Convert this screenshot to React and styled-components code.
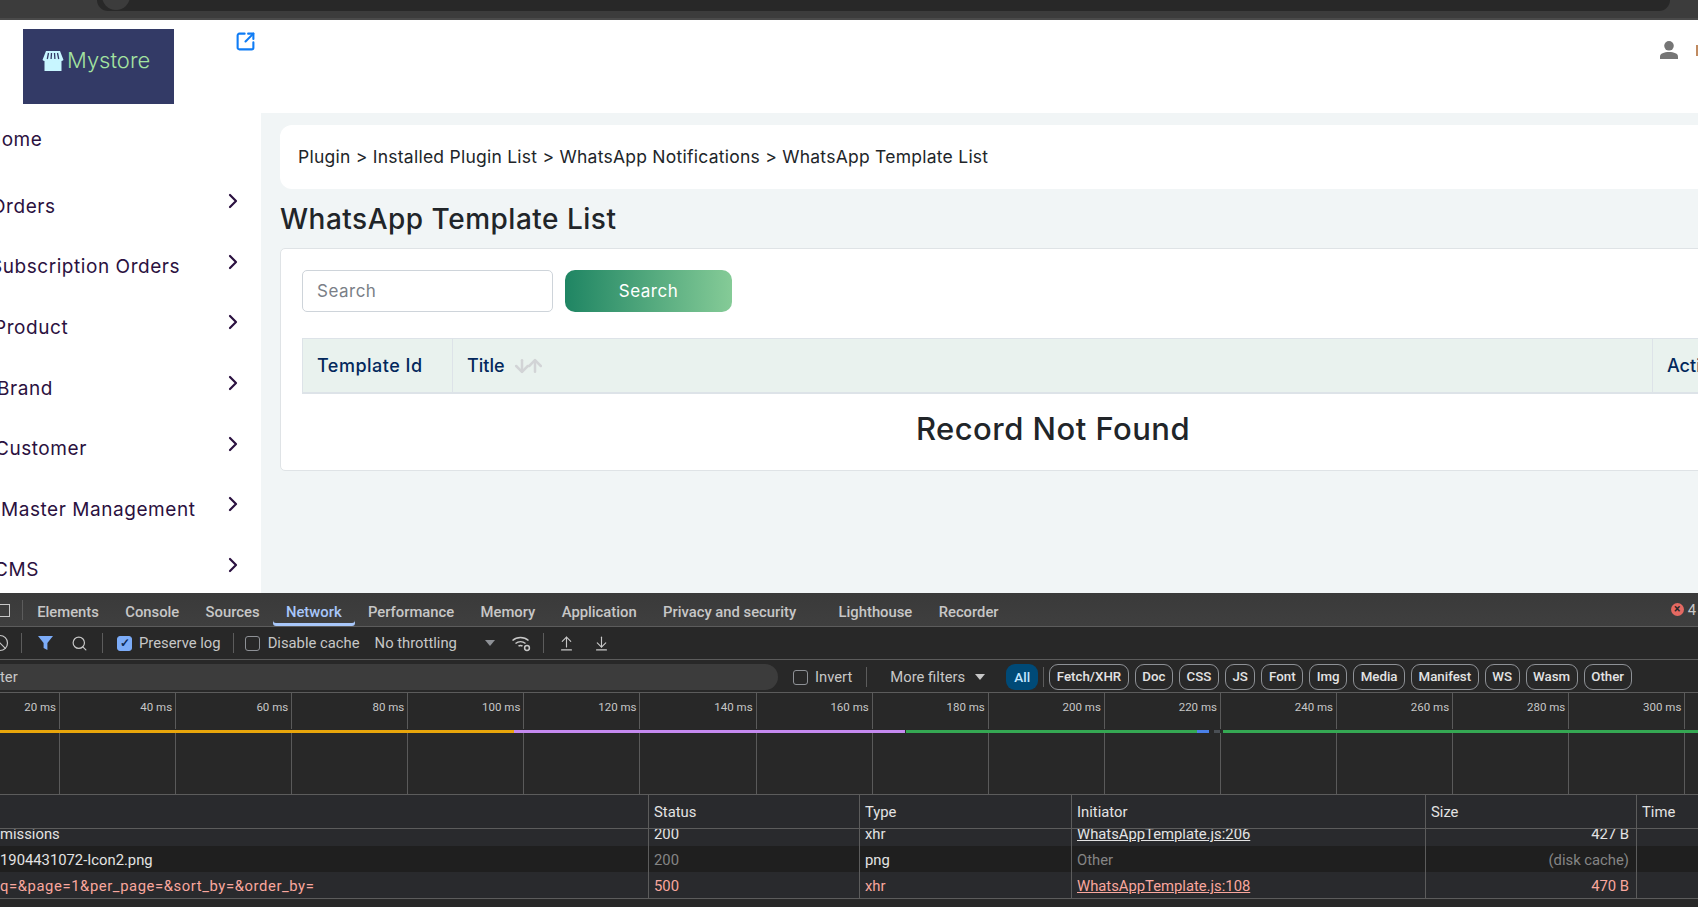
import React from "react";
import styled, { createGlobalStyle } from "styled-components";
import {
  ArrowDown,
  ArrowDownToLine,
  ArrowUp,
  ArrowUpFromLine,
  Ban,
  ChevronRight,
  Search as SearchIcon,
  SquareArrowOutUpRight,
} from "lucide-react";

const MENU = [
  { label: "Home", x: -13, shift: -6, height: 58, arrow: false },
  { label: "Orders", x: -9, height: 60.6, arrow: true },
  { label: "Subscription Orders", x: -10, height: 60.6, arrow: true },
  { label: "Product", x: -6, height: 60.6, arrow: true },
  { label: "Brand", x: -3, height: 60.6, arrow: true },
  { label: "Customer", x: -5, height: 60.6, arrow: true },
  { label: "Master Management", x: 1, height: 60.6, arrow: true },
  { label: "CMS", x: -6, height: 60.6, arrow: true },
];

const TABS = [
  "Elements",
  "Console",
  "Sources",
  "Network",
  "Performance",
  "Memory",
  "Application",
  "Privacy and security",
  "Lighthouse",
  "Recorder",
];

const CHIPS = [
  "Fetch/XHR",
  "Doc",
  "CSS",
  "JS",
  "Font",
  "Img",
  "Media",
  "Manifest",
  "WS",
  "Wasm",
  "Other",
];

const TICKS = [20, 40, 60, 80, 100, 120, 140, 160, 180, 200, 220, 240, 260, 280, 300, 320];

const REQUESTS = [
  { name: "missions", status: "200", type: "xhr", initiator: "WhatsAppTemplate.js:206", size: "427 B" },
  { name: "1904431072-Icon2.png", status: "200", type: "png", initiator: "Other", size: "(disk cache)", tone: "cached" },
  { name: "q=&page=1&per_page=&sort_by=&order_by=", status: "500", type: "xhr", initiator: "WhatsAppTemplate.js:108", size: "470 B", tone: "error" },
];

const GlobalStyle = createGlobalStyle`
  html, body {
    margin: 0;
    padding: 0;
    background: #fff;
    overflow: hidden;
  }
  * {
    box-sizing: border-box;
  }
`;

const App = () => {
  return (
    <Screen>
      <GlobalStyle />
      <BrowserBar>
        <AddressBar>
          <SiteBadge />
        </AddressBar>
      </BrowserBar>

      <Page>
        <Header>
          <Logo>
            <StoreMark />
            <LogoText>Mystore</LogoText>
          </Logo>
          <VisitLink>
            <SquareArrowOutUpRight size={21} strokeWidth={2.4} />
          </VisitLink>
          <HeaderRight>
            <UserMark />
            <LangSliver />
          </HeaderRight>
        </Header>
        <Body>
          <Sidebar>
            {MENU.map((item) => (
              <MenuItem key={item.label} $height={item.height}>
                <MenuLabel $x={item.x} $shift={item.shift}>
                  {item.label}
                </MenuLabel>
                {item.arrow && <ChevronRight size={24} strokeWidth={2.2} />}
              </MenuItem>
            ))}
          </Sidebar>
          <Main>
            <Breadcrumb>
              Plugin &gt; Installed Plugin List &gt; WhatsApp Notifications &gt; WhatsApp Template List
            </Breadcrumb>
            <PageTitle>WhatsApp Template List</PageTitle>
            <Card>
              <SearchRow>
                <SearchInput placeholder="Search" readOnly />
                <SearchButton>Search</SearchButton>
              </SearchRow>
              <TableHead>
                <HeadCell $width="150px" $spaced>Template Id</HeadCell>
                <HeadCell $grow>
                  Title
                  <SortArrows>
                    <ArrowDown size={20} strokeWidth={3} />
                    <ArrowUp size={20} strokeWidth={3} />
                  </SortArrows>
                </HeadCell>
                <HeadCell $width="150px">Action</HeadCell>
              </TableHead>
              <EmptyText>Record Not Found</EmptyText>
            </Card>
          </Main>
        </Body>
      </Page>

      <DevTools>
        <TabBar>
          <DockIcon />
          <TabDivider />
          {TABS.map((tab) => (
            <Tab key={tab} $active={tab === "Network"} $spaced={tab === "Lighthouse"}>
              {tab}
            </Tab>
          ))}
          <ErrorCount>
            <ErrorDot>×</ErrorDot>4
          </ErrorCount>
        </TabBar>

        <Toolbar>
          <ClearIcon>
            <Ban size={18} strokeWidth={1.6} />
          </ClearIcon>
          <ToolDivider $left={12} $right={15} />
          <svg width="17" height="16" viewBox="0 0 17 16">
            <path d="M1 1h15l-5.6 7v7l-3.8-2V8z" fill="#7cacf8" />
          </svg>
          <ToolIcon $left={17}>
            <SearchIcon size={17} strokeWidth={1.7} />
          </ToolIcon>
          <ToolDivider $left={14} $right={14} />
          <CheckBox $checked>✓</CheckBox>
          <ToolText $left={7}>Preserve log</ToolText>
          <ToolDivider $left={12} $right={11} />
          <CheckBox />
          <ToolText $left={8}>Disable cache</ToolText>
          <ToolText $left={15} $width="110px">No throttling</ToolText>
          <DropArrow />
          <NetworkConfig $left={16}>
            <svg width="21" height="20" viewBox="0 0 21 20" fill="none" stroke="#c7c7c7" strokeWidth="1.5">
              <path d="M1.5 7.5a12 12 0 0 1 16 0M4.5 10.5a8 8 0 0 1 10 0M7.5 13a4 4 0 0 1 4 0" />
              <circle cx="16" cy="15" r="2.4" />
            </svg>
          </NetworkConfig>
          <ToolDivider $left={11} $right={14} />
          <ToolIcon>
            <ArrowUpFromLine size={17} strokeWidth={1.6} />
          </ToolIcon>
          <ToolIcon $left={18}>
            <ArrowDownToLine size={17} strokeWidth={1.6} />
          </ToolIcon>
        </Toolbar>

        <FilterBar>
          <FilterInput>ter</FilterInput>
          <CheckBox $left={15} />
          <ToolText $left={7}>Invert</ToolText>
          <ToolDivider $left={14} $right={23} />
          <ToolText>More filters</ToolText>
          <DropArrow $left={10} />
          <AllChip>All</AllChip>
          <ToolDivider $left={5} $right={5} />
          <ChipRow>
            {CHIPS.map((chip) => (
              <Chip key={chip}>{chip}</Chip>
            ))}
          </ChipRow>
        </FilterBar>

        <Timeline>
          {TICKS.map((tick, index) => (
            <Tick key={tick} $first={index === 0}>
              {tick} ms
            </Tick>
          ))}
          <Segments>
            <Segment $width={514} $color="#e8a60b" />
            <Segment $width={391} $color="#c58af0" />
            <Segment $width={1} $color="#282828" />
            <Segment $width={291} $color="#35a853" />
            <Segment $width={12} $color="#4a80e8" />
            <Segment $width={5} $color="#282828" />
            <Segment $width={6} $color="#4a4f55" />
            <Segment $width={3} $color="#282828" />
            <Segment $width={475} $color="#35a853" />
          </Segments>
        </Timeline>

        <RequestTable>
          <RequestHead>
            <span />
            <HeadLabel>Status</HeadLabel>
            <HeadLabel>Type</HeadLabel>
            <HeadLabel>Initiator</HeadLabel>
            <HeadLabel>Size</HeadLabel>
            <HeadLabel>Time</HeadLabel>
          </RequestHead>
          <RequestBody>
            {REQUESTS.map((row, index) => (
              <RequestRow key={row.name} $dark={index === 1} $tone={row.tone}>
                <NameCell $wide={row.tone === "error"}>{row.name}</NameCell>
                <DataCell $muted={row.tone === "cached"}>{row.status}</DataCell>
                <DataCell>{row.type}</DataCell>
                <DataCell $muted={row.tone === "cached"} $link={row.tone !== "cached"}>
                  {row.initiator}
                </DataCell>
                <DataCell $right $muted={row.tone === "cached"}>
                  {row.size}
                </DataCell>
                <DataCell />
              </RequestRow>
            ))}
          </RequestBody>
        </RequestTable>
        <StatusStrip />
      </DevTools>
    </Screen>
  );
};

const StoreMark = () => (
  <svg width="24" height="22" viewBox="0 0 23 22">
    <path d="M3 8h17v13H3z" fill="#c8f6ff" />
    <path d="M4.5 1h14L22 10c-1.4 1.4-3 1.4-4 0-1.2 1.4-3 1.4-4 0-1.2 1.4-3.6 1.4-5 0-1 1.4-2.800 1.400-4 0-1 1.4-2.600 1.400-4 0z" fill="#c8f6ff" />
    <path d="M7 3 5.800 9M10 3 9.600 9M13 3l.4 6M16 3l1.200 6" stroke="#333a66" strokeWidth="1.300" />
  </svg>
);

const UserMark = () => (
  <svg width="18" height="18" viewBox="0 0 18 18">
    <circle cx="9" cy="4.800" r="4.800" fill="#757575" />
    <path d="M0 18v-2.500C0 12.500 4 11 9 11s9 1.500 9 4.500V18z" fill="#757575" />
  </svg>
);

const Screen = styled.div`
  width: 1698px;
  height: 907px;
  display: flex;
  flex-direction: column;
  overflow: hidden;
  font-family: Inter, "Open Sans", sans-serif;
`;

const BrowserBar = styled.div`
  height: 20px;
  flex: none;
  padding-left: 97px;
  padding-right: 28px;
  background: #3c3c3c;
  border-bottom: 2px solid #4a4a4a;
`;

const AddressBar = styled.div`
  height: 11px;
  background: #282828;
  border-radius: 0 0 14px 14px;
  padding-left: 5px;
  overflow: hidden;
`;

const SiteBadge = styled.div`
  width: 28px;
  height: 28px;
  margin-top: -18px;
  border-radius: 50%;
  background: #3c3c3c;
`;

const Page = styled.div`
  height: 573px;
  flex: none;
  display: flex;
  flex-direction: column;
  background: #fff;
  overflow: hidden;
`;

const Header = styled.header`
  height: 93px;
  flex: none;
  display: flex;
  align-items: flex-start;
  padding: 9px 0 0 23px;
`;

const Logo = styled.div`
  width: 151px;
  height: 75px;
  background: #333a66;
  display: flex;
  align-items: flex-start;
  gap: 2px;
  padding: 21px 0 0 18px;
`;

const LogoText = styled.span`
  color: #a4e4a0;
  font-size: 22px;
  line-height: 24px;
  font-weight: 300;
  margin-top: -2px;
`;

const VisitLink = styled.div`
  margin: 2px 0 0 61px;
  color: #0f7cf5;
  line-height: 0;
`;

const HeaderRight = styled.div`
  margin-left: auto;
  padding-top: 12px;
  display: flex;
  align-items: center;
  gap: 18px;
`;

const LangSliver = styled.div`
  width: 2px;
  height: 11px;
  background: #c08a60;
`;

const Body = styled.div`
  flex: 1;
  display: flex;
  min-height: 0;
`;

const Sidebar = styled.nav`
  width: 261px;
  flex: none;
  padding-right: 16px;
  color: #2b1140;
`;

const MenuItem = styled.div`
  height: ${(props) => props.$height}px;
  display: flex;
  align-items: center;
  justify-content: space-between;
  white-space: nowrap;
`;

const MenuLabel = styled.span`
  font-size: 19px;
  letter-spacing: 0.55px;
  margin-left: ${(props) => props.$x}px;
  margin-top: ${(props) => (props.$shift !== undefined ? props.$shift : 10)}px;
`;

const Main = styled.main`
  flex: 1;
  min-width: 0;
  padding: 12px 0 0 19px;
  background: #f1f5f6;
  color: #212529;
  overflow: hidden;
`;

const Breadcrumb = styled.div`
  width: 1546px;
  height: 64px;
  display: flex;
  align-items: center;
  padding: 0 0 2px 18px;
  background: #fff;
  border-radius: 12px;
  font-size: 17.5px;
  letter-spacing: 0.25px;
`;

const PageTitle = styled.h1`
  margin: 12px 0 0;
  height: 47px;
  font-size: 28px;
  line-height: 37px;
  font-weight: 500;
  letter-spacing: 0.5px;
`;

const Card = styled.section`
  width: 1546px;
  height: 223px;
  padding: 21px 21px 0;
  background: #fff;
  border: 1px solid #dfe3e6;
  border-radius: 5px;
`;

const SearchRow = styled.div`
  display: flex;
  gap: 12px;
`;

const SearchInput = styled.input`
  width: 251px;
  height: 42px;
  padding: 0 14px;
  border: 1px solid #ced4da;
  border-radius: 5px;
  font: 17px Inter, sans-serif;
  letter-spacing: 0.5px;
  color: #495057;
  outline: none;

  &::placeholder {
    color: #7a7f87;
  }
`;

const SearchButton = styled.button`
  width: 167px;
  height: 42px;
  border: 0;
  border-radius: 10px;
  background: linear-gradient(90deg, #1f8563, #85cb97);
  color: #fff;
  font: 400 17px Inter, sans-serif;
  letter-spacing: 0.5px;
`;

const TableHead = styled.div`
  margin-top: 26px;
  height: 56px;
  display: flex;
  background: #e9f2ee;
  border: 1px solid #dde3e8;
  border-bottom-width: 2px;
  color: #03285c;
  font-size: 18px;
  font-weight: 500;
`;

const HeadCell = styled.div`
  flex: ${(props) => (props.$grow ? 1 : "none")};
  width: ${(props) => props.$width || "auto"};
  display: flex;
  align-items: center;
  padding-left: 14px;
  letter-spacing: ${(props) => (props.$spaced ? "0.5px" : "0")};
  white-space: nowrap;
  border-right: 1px solid #dde3e8;

  &:last-child {
    border-right: 0;
  }
`;

const SortArrows = styled.span`
  display: flex;
  margin-left: 7px;
  color: #d2d4d6;

  svg + svg {
    margin-left: -7px;
  }
`;

const EmptyText = styled.div`
  padding-top: 16px;
  text-align: center;
  font-size: 31px;
  letter-spacing: 0.47px;
  line-height: 38px;
  font-weight: 500;
  color: #212529;
`;

const DevTools = styled.div`
  height: 314px;
  flex: none;
  display: flex;
  flex-direction: column;
  background: #282828;
  color: #c7c7c7;
  font-family: Roboto, "Liberation Sans", sans-serif;
  font-size: 14.8px;
  overflow: hidden;
`;

const TabBar = styled.div`
  height: 34px;
  flex: none;
  display: flex;
  background: linear-gradient(#3a3a3a, #3f3f3f);
  border-bottom: 1px solid #5c5c5c;
`;

const DockIcon = styled.div`
  width: 10px;
  height: 13px;
  margin: 11px 0 0 0;
  border: 1.500px solid #c7c7c7;
  border-left: 0;
`;

const TabDivider = styled.div`
  width: 1px;
  height: 20px;
  margin: 7px 1px 0 12px;
  background: #5c5c5c;
`;

const Tab = styled.div`
  height: 33px;
  line-height: 39px;
  padding: 0 13.200px;
  margin-left: ${(props) => (props.$spaced ? "16px" : 0)};
  white-space: nowrap;
  font-weight: 500;
  color: ${(props) => (props.$active ? "#a8c7fa" : "#c7c7c7")};
  box-shadow: ${(props) => (props.$active ? "inset 0 -3px 0 #a8c7fa" : "none")};
  border-radius: 0 0 3px 3px;
`;

const ErrorCount = styled.div`
  margin-left: auto;
  padding-top: 8px;
  display: flex;
  align-items: flex-start;
  gap: 4px;
  padding-right: 2px;
`;

const ErrorDot = styled.span`
  width: 13px;
  height: 13px;
  margin-top: 2px;
  border-radius: 50%;
  background: #e46962;
  color: #282828;
  font-size: 12px;
  line-height: 12px;
  font-weight: 700;
  text-align: center;
`;

const Toolbar = styled.div`
  height: 33px;
  flex: none;
  display: flex;
  align-items: center;
  border-bottom: 1px solid #5c5c5c;
`;

const ClearIcon = styled.div`
  margin-left: -9px;
  line-height: 0;
`;

const ToolDivider = styled.div`
  width: 1px;
  height: 20px;
  flex: none;
  margin-left: ${(props) => props.$left || 0}px;
  margin-right: ${(props) => props.$right || 0}px;
  background: #5c5c5c;
`;

const ToolIcon = styled.div`
  margin-left: ${(props) => props.$left || 0}px;
  line-height: 0;
`;

const NetworkConfig = styled(ToolIcon)``;

const CheckBox = styled.span`
  width: 15px;
  height: 15px;
  flex: none;
  margin-left: ${(props) => props.$left || 0}px;
  border-radius: 3px;
  border: 1px solid ${(props) => (props.$checked ? "#7cacf8" : "#8e9196")};
  background: ${(props) => (props.$checked ? "#7cacf8" : "transparent")};
  color: #0c2a55;
  font-size: 12px;
  line-height: 13px;
  font-weight: 700;
  text-align: center;
`;

const ToolText = styled.span`
  flex: none;
  width: ${(props) => props.$width || "auto"};
  margin-left: ${(props) => props.$left || 0}px;
  white-space: nowrap;
`;

const DropArrow = styled.span`
  width: 0;
  height: 0;
  flex: none;
  margin-left: ${(props) => props.$left || 0}px;
  border-left: 5px solid transparent;
  border-right: 5px solid transparent;
  border-top: 6px solid ${(props) => (props.$left ? "#c7c7c7" : "#8e9196")};
`;

const FilterBar = styled.div`
  height: 33px;
  flex: none;
  display: flex;
  align-items: center;
  padding-top: 2px;
  border-bottom: 1px solid #5c5c5c;
`;

const FilterInput = styled.div`
  width: 778px;
  height: 26px;
  flex: none;
  line-height: 26px;
  background: #3c3c3c;
  border-radius: 0 13px 13px 0;
`;

const AllChip = styled.span`
  width: 32px;
  height: 26px;
  flex: none;
  margin-left: 21px;
  line-height: 26px;
  font-size: 13.5px;
  text-align: center;
  border-radius: 9px;
  background: #004a77;
  color: #c2e7ff;
  font-weight: 500;
`;

const ChipRow = styled.div`
  display: flex;
  gap: 6px;
`;

const Chip = styled.span`
  height: 26px;
  line-height: 24px;
  padding: 0 6.550px;
  border: 1px solid #8e9196;
  border-radius: 9px;
  color: #e3e3e3;
  font-size: 13.3px;
  font-weight: 500;
  white-space: nowrap;
`;

const Timeline = styled.div`
  position: relative;
  height: 102px;
  flex: none;
  display: flex;
  border-bottom: 1px solid #5c5c5c;
`;

const Tick = styled.div`
  width: ${(props) => (props.$first ? "60px" : "116.100px")};
  flex: none;
  padding: 5px 3px 0 0;
  border-right: 1px solid #5a5a5a;
  text-align: right;
  font-size: 11.5px;
  line-height: 18px;
  white-space: nowrap;
`;

const Segments = styled.div`
  position: absolute;
  top: 36px;
  left: 0;
  right: 0;
  height: 4px;
  display: flex;
  background: #282828;
`;

const Segment = styled.span`
  width: ${(props) => props.$width}px;
  flex: none;
  margin: 0.500px 0;
  background: ${(props) => props.$color};
`;

const RequestTable = styled.div`
  flex: none;
  background: #292a2d;
`;

const COLUMNS = "648px 211px 212px 354px 211px 62px";

const RequestHead = styled.div`
  height: 34px;
  display: grid;
  grid-template-columns: ${COLUMNS};
  border-bottom: 1px solid #5c5c5c;
`;

const HeadLabel = styled.span`
  line-height: 35px;
  padding-left: 5px;
  border-left: 1px solid #5c5c5c;
  color: #e3e3e3;
`;

const RequestBody = styled.div`
  height: 70px;
  overflow: hidden;
  border-bottom: 1px solid #5c5c5c;
`;

const RequestRow = styled.div`
  height: 26px;
  display: grid;
  grid-template-columns: ${COLUMNS};
  background: ${(props) => (props.$dark ? "#1f1f1f" : "#292a2d")};
  color: ${(props) => (props.$tone === "error" ? "#f9a79e" : "#e3e3e3")};

  &:first-child {
    margin-top: -9px;
  }
`;

const NameCell = styled.span`
  line-height: 28px;
  letter-spacing: ${(props) => (props.$wide ? "0.6px" : "0")};
  white-space: nowrap;
`;

const DataCell = styled.span`
  line-height: 28px;
  padding: 0 ${(props) => (props.$right ? "7px" : "5px")} 0 5px;
  border-left: 1px solid #5c5c5c;
  white-space: nowrap;
  text-align: ${(props) => (props.$right ? "right" : "left")};
  text-decoration: ${(props) => (props.$link ? "underline" : "none")};
  color: ${(props) => (props.$muted ? "#858585" : "inherit")};
`;

const StatusStrip = styled.div`
  flex: 1;
  background: #282828;
`;

export default App;
